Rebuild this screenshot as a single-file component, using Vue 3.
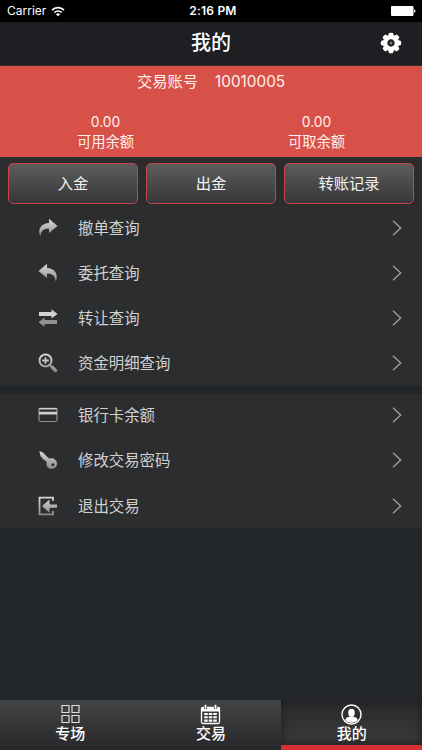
<template>
	<div class="page">
		<div class="status">
			<div class="status__left">
				<span>Carrier</span>
				<svg width="14" height="11" viewBox="0 0 14 11" fill="none" stroke="#fff" stroke-width="1.7">
					<path d="M1 4.1a8.6 8.6 0 0 1 12 0" />
					<path d="M3.3 6.5a5.3 5.3 0 0 1 7.4 0" />
					<path d="M7 10.3 4.9 8.2a3 3 0 0 1 4.2 0z" fill="#fff" stroke="none" />
				</svg>
			</div>
			<b class="status__time">2:16 PM</b>
			<svg class="status__battery" width="25" height="10" viewBox="0 0 25 10" fill="#fff">
				<rect width="22.5" height="10" rx="1" />
				<path d="M23.2 3.2c1.7.3 1.7 3.3 0 3.6z" />
			</svg>
		</div>

		<header class="header">
			<h1>我的</h1>
			<svg class="header__gear" width="22" height="22" viewBox="-11 -11 22 22">
				<g fill="#fff">
					<path
						v-for="n in 8"
						:key="n"
						d="M-2.9-7-2-9.9Q0-10.7 2-9.9L2.9-7z"
						:transform="`rotate(${n * 45})`"
					/>
				</g>
				<circle r="5.8" fill="none" stroke="#fff" stroke-width="4.2" />
				<circle r="1.5" fill="#77787b" />
			</svg>
		</header>

		<section class="account">
			<p class="account__number"><span>交易账号</span><span>10010005</span></p>
			<div class="account__balances">
				<div v-for="item in balances" :key="item.label" class="balance">
					<span class="balance__value">{{ item.value }}</span>
					<span>{{ item.label }}</span>
				</div>
			</div>
		</section>

		<div class="actions">
			<button v-for="action in actions" :key="action">{{ action }}</button>
		</div>

		<svg class="defs" width="0" height="0">
			<linearGradient id="metal" gradientUnits="userSpaceOnUse" x1="0" y1="0" x2="0" y2="20">
				<stop offset="0" stop-color="#dedede" />
				<stop offset="1" stop-color="#858585" />
			</linearGradient>
		</svg>

		<ul v-for="(group, index) in groups" :key="index" class="menu">
			<li v-for="item in group" :key="item.icon" class="menu__item">
				<svg class="menu__icon" width="20" height="20" viewBox="0 0 20 20" fill="url(#metal)">
					<path v-if="item.icon === 'redo'" d="M11 .8 19.5 8 11 15v-4.2C6.500 10.300 3 12 2.300 18.500-.5 12.500 2 5.500 11 5z" />
					<path v-else-if="item.icon === 'undo'" d="M9 .8.5 8 9 15v-4.200c4.500-.5 8 1.200 8.700 7.700C20.500 12.500 18 5.500 9 5z" />
					<g v-else-if="item.icon === 'swap'">
						<path d="M1 4h12.500V1.300L19.500 6l-6 4.500V8H1z" fill="#d2d2d2" />
						<path d="M19 12H6.500V9.500l-6 4.700 6 4.500V16H19z" fill="#929292" />
					</g>
					<g v-else-if="item.icon === 'zoom'" fill="none" stroke="url(#metal)">
						<circle cx="7.500" cy="7.500" r="6" stroke-width="2" />
						<path d="M4.200 7.500h6.600M7.500 4.200v6.600" stroke="#c5c5c5" stroke-width="1.800" />
						<path d="m12 12 1.500 1.500" stroke-width="1.500" />
						<path d="m14.200 14.200 3.300 3.300" stroke-width="3.300" stroke-linecap="round" />
					</g>
					<g v-else-if="item.icon === 'card'">
						<rect x="1" y="3.300" width="18" height="13.200" rx="1.500" fill="none" stroke="#929292" stroke-width="1.200" />
						<path d="M.9 3.800q.3-.9 1.100-.9h16q.8 0 1.100.9v.8H.9zM1 6.800h18v2.700H1z" fill="#cfcfcf" />
					</g>
					<path
						v-else-if="item.icon === 'key'"
						fill-rule="evenodd"
						d="M1.300 1.200 4.200 2l6.900 6.500c3.500-1.100 7.900.9 7.900 5 0 3.400-2.400 5.300-5.400 5.300-4.200 0-5.700-3.500-4.800-6.600L6 9.500 4.800 9.800 4.500 8 2.700 6.600zM14.800 13.200a1.500 1.500 0 1 0 .1 3 1.500 1.500 0 0 0-.1-3z"
					/>
					<g v-else>
						<path d="M15 5V1.700H1.500v16.600H15V15" fill="none" stroke="url(#metal)" stroke-width="1.800" />
						<path d="m4 10 7.500-6.500v4.300l1.200.7H19v3.200h-6.300l-1.200.7v4.300z" />
					</g>
				</svg>
				<span class="menu__label">{{ item.label }}</span>
				<svg width="10" height="16" viewBox="0 0 10 16" fill="none" stroke="#a0a0a1" stroke-width="1.300">
					<path d="M1 .8 8.700 8 1 15.200" />
				</svg>
			</li>
		</ul>

		<nav class="tabs">
			<div v-for="tab in tabs" :key="tab.icon" class="tab" :class="{ active: tab.icon === current }">
				<svg width="21" height="21" viewBox="0 0 21 21" fill="none" stroke="#fff">
					<path
						v-if="tab.icon === 'grid'"
						stroke="#dedede"
						stroke-width="1.200"
						d="M2 1.500h7v7H2zM12 1.500h7v7h-7zM2 11.500h7v7H2zM12 11.500h7v7h-7z"
					/>
					<g v-else-if="tab.icon === 'calendar'">
						<rect x="1.500" y="3.500" width="18" height="16" rx="1.500" stroke-width="1.300" />
						<path d="M1 3.500h19v4H1z" fill="#fff" stroke="none" />
						<path d="M5.500 1v4M15.500 1v4" stroke="#444547" stroke-width="3.200" />
						<path d="M5.500.8v4M15.500.8v4" stroke-width="1.700" />
						<path d="M4.200 10h12.600M4.200 13.300h12.600M4.200 16.600h12.600" stroke-width="2.100" stroke-dasharray="3.500 1.050" />
					</g>
					<g v-else>
						<circle cx="10.500" cy="10.500" r="9.500" stroke-width="1.400" />
						<path d="M4.200 16.300c.6-2.800 2.700-3.300 4.700-3.800h3.200c2 .5 4.100 1 4.700 3.800a9 9 0 0 1-12.600 0z" fill="#fff" stroke="none" />
						<ellipse cx="10.500" cy="8.800" rx="3.300" ry="4" fill="#fff" stroke="none" />
					</g>
				</svg>
				<span>{{ tab.label }}</span>
			</div>
		</nav>
	</div>
</template>

<script setup>
import { ref } from "vue";

const balances = [
	{ value: "0.00", label: "可用余额" },
	{ value: "0.00", label: "可取余额" },
];

const actions = ["入金", "出金", "转账记录"];

const groups = [
	[
		{ icon: "redo", label: "撤单查询" },
		{ icon: "undo", label: "委托查询" },
		{ icon: "swap", label: "转让查询" },
		{ icon: "zoom", label: "资金明细查询" },
	],
	[
		{ icon: "card", label: "银行卡余额" },
		{ icon: "key", label: "修改交易密码" },
		{ icon: "exit", label: "退出交易" },
	],
];

const tabs = [
	{ icon: "grid", label: "专场" },
	{ icon: "calendar", label: "交易" },
	{ icon: "user", label: "我的" },
];

const current = ref("user");
</script>

<style>
body {
	margin: 0;
	background: #222629;
}
</style>

<style scoped>
* {
	box-sizing: border-box;
}

.page {
	display: flex;
	flex-direction: column;
	height: 100vh;
	background: #222629;
	color: #fff;
	font-family: Inter, "Noto Sans CJK SC", sans-serif;
}

.status {
	display: grid;
	grid-template-columns: 1fr auto 1fr;
	align-items: center;
	height: 22px;
	padding: 0 6px 0 7px;
	background: #000;
	font-size: 12px;
	line-height: 22px;
}

.status__left {
	display: flex;
	align-items: center;
	gap: 5px;
}

.status__time {
	padding-left: 3px;
	font-weight: 600;
	letter-spacing: 0.2px;
}

.status__battery {
	justify-self: end;
}

.header {
	display: grid;
	grid-template-columns: 1fr auto 1fr;
	align-items: center;
	height: 44px;
	padding: 0 20px 2px;
	background: #1e1f23;
	border-bottom: 1px solid #3b292c;
}

.header h1 {
	grid-column: 2;
	margin: 0;
	font-size: 20px;
	font-weight: 500;
	line-height: 40px;
}

.header__gear {
	justify-self: end;
}

.account {
	height: 91px;
	background: #d85148;
	color: #fff0ee;
}

.account__number {
	display: flex;
	justify-content: center;
	gap: 17px;
	margin: 0;
	padding-top: 5px;
	font-size: 15.3px;
	line-height: 22px;
}

.account__balances {
	display: flex;
	margin-top: 20px;
}

.balance {
	display: flex;
	flex: 1;
	flex-direction: column;
	align-items: center;
	font-size: 14.3px;
	line-height: 19px;
}

.balance__value {
	font-size: 13.8px;
}

.actions {
	display: grid;
	grid-template-columns: repeat(3, 1fr);
	gap: 8px;
	height: 49.4px;
	padding: 6px 8px 2.4px;
	background: #2b2c2e;
}

.actions button {
	padding: 0 0 3px;
	border: 1px solid #c8444a;
	border-radius: 5px;
	background: linear-gradient(#5c5c5d, #373739);
	color: #f4f4f4;
	font-family: inherit;
	font-size: 15.3px;
}

.defs {
	position: absolute;
}

.menu {
	margin: 0 0 8px;
	padding: 0;
	background: #2c2d2f;
	list-style: none;
}

.menu__item {
	display: flex;
	align-items: center;
	height: 44.8px;
	padding: 0 20px 0 38px;
	border-bottom: 1px solid #292a2c;
}

.menu__item:last-child {
	border-bottom: 0;
}

.menu__label {
	flex: 1;
	margin-left: 20px;
	padding-top: 2px;
	color: #d1d1d2;
	font-size: 15.4px;
	line-height: 22px;
}

.tabs {
	display: grid;
	grid-template-columns: repeat(3, 1fr);
	height: 50px;
	margin-top: auto;
}

.tab {
	display: flex;
	flex-direction: column;
	align-items: center;
	padding-top: 4px;
	background: linear-gradient(#434446, #272729);
	font-size: 15px;
	font-weight: 500;
	line-height: 17px;
}

.tab.active {
	border-bottom: 5px solid #d72e32;
	background: linear-gradient(#29292b, #353638 70%);
	box-shadow: inset 0 0 8px #1c1c1e;
}
</style>
